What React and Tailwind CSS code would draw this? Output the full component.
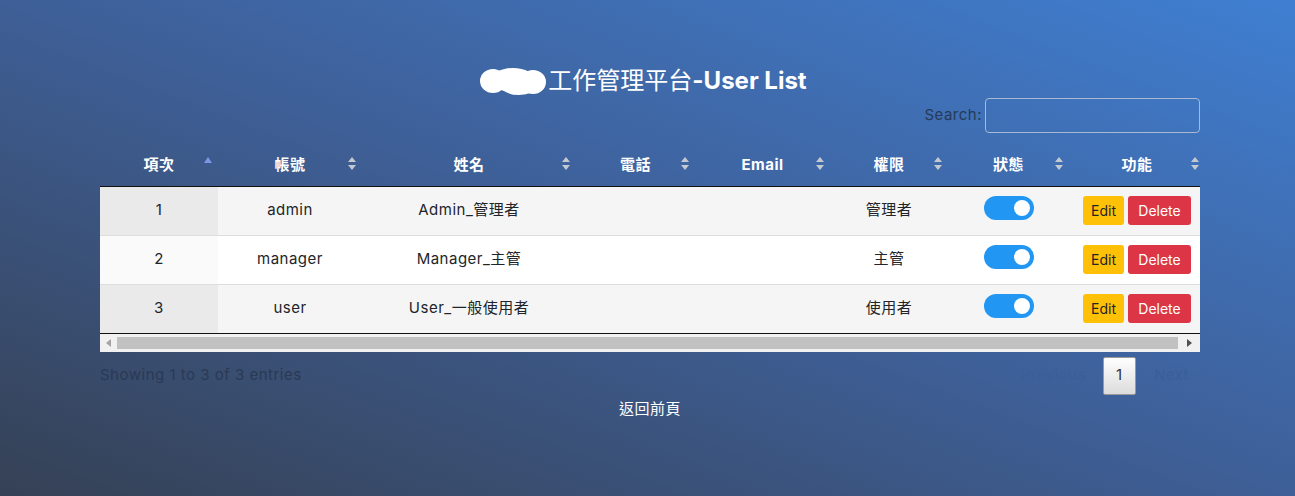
import React from 'react';

const FONT = { fontFamily: 'Inter, "Noto Sans CJK TC", sans-serif' };

const columns = [
  { label: '項次', w: 'w-[118px]', sorted: true },
  { label: '帳號', w: 'w-[144px]' },
  { label: '姓名', w: 'w-[214px]' },
  { label: '電話', w: 'w-[119px]' },
  { label: 'Email', w: 'w-[135px]' },
  { label: '權限', w: 'w-[118px]' },
  { label: '狀態', w: 'w-[121px]' },
  { label: '功能', w: 'w-[136px]' },
];

const users = [
  { id: 1, account: 'admin', name: 'Admin_管理者', role: '管理者' },
  { id: 2, account: 'manager', name: 'Manager_主管', role: '主管' },
  { id: 3, account: 'user', name: 'User_一般使用者', role: '使用者' },
];

const SortIcon = ({ sorted }) => (
  <svg width="8" height="14" viewBox="0 0 8 14" className="absolute right-[6px] top-[12px]">
    {sorted ? (
      <polygon points="4,0 8,6 0,6" fill="#8094e6" />
    ) : (
      <>
        <polygon points="4,0 8,5 0,5" fill="#c4c8d0" />
        <polygon points="0,8 8,8 4,13" fill="#c4c8d0" />
      </>
    )}
  </svg>
);

const Toggle = () => (
  <div className="mx-auto w-[50px] h-[24px] rounded-full bg-[#2196f3] flex items-center justify-end pr-[4px]">
    <div className="w-[16px] h-[16px] rounded-full bg-white" />
  </div>
);

const Blob = () => (
  <svg width="68" height="30" viewBox="0 0 68 30" className="inline-block align-middle mr-[1px] -mt-[2px]">
    <ellipse cx="14" cy="15" rx="13" ry="12" fill="white" />
    <ellipse cx="34" cy="14" rx="22" ry="12" fill="white" />
    <ellipse cx="54" cy="16" rx="13" ry="12" fill="white" />
    <ellipse cx="40" cy="20" rx="18" ry="9" fill="white" />
  </svg>
);

export default function App() {
  return (
    <div style={FONT} className="w-[1295px] h-[496px] bg-linear-to-tr from-[#354155] via-[#3e5f97] to-[#3f7fd2] overflow-hidden tracking-[0.5px]">
      <div className="w-[1100px] ml-[100px] pt-[64px]">
        <h1 className="h-[34px] leading-[34px] text-center text-[24px] text-white whitespace-nowrap pr-[14px] tracking-normal">
          <Blob />
          <span>工作管理平台</span>
          <span className="font-bold">-User List</span>
        </h1>

        <div className="flex justify-end items-center h-[35px]">
          <span className="text-[15px] text-[#263a58] mr-[3px]">Search:</span>
          <input className="w-[215px] h-[35px] border border-[#a9b9d3] rounded-[4px] bg-transparent outline-none" />
        </div>

        <div className="mt-[12px] w-[1100px] overflow-hidden">
          <table className="table-fixed border-collapse w-[1105px]">
            <thead>
              <tr className="h-[41px] border-b border-[#111]">
                {columns.map((c) => (
                  <th key={c.label} className={`${c.w} relative text-center text-[15px] font-bold text-white p-0`}>
                    {c.label}
                    <SortIcon sorted={c.sorted} />
                  </th>
                ))}
              </tr>
            </thead>
            <tbody className="text-[15px] text-[#212529]">
              {users.map((u, i) => {
                const odd = i % 2 === 0;
                return (
                  <tr key={u.id} className={`h-[49px] border-t border-[#dddddd] ${odd ? 'bg-[#f5f5f5]' : 'bg-white'} ${i === users.length - 1 ? 'border-b border-b-[#111]' : ''}`}>
                    <td className={`text-center ${odd ? 'bg-[#eaeaea]' : 'bg-[#fafafa]'}`}>{u.id}</td>
                    <td className="text-center">{u.account}</td>
                    <td className="text-center">{u.name}</td>
                    <td />
                    <td />
                    <td className="text-center">{u.role}</td>
                    <td className="text-center pb-[5px]"><Toggle /></td>
                    <td className="pr-[14px]">
                      <div className="flex justify-end gap-[4px] tracking-normal">
                        <button className="h-[29px] w-[41px] bg-[#ffc107] text-[#212529] text-[14px] rounded-[3px]">Edit</button>
                        <button className="h-[29px] w-[63px] bg-[#dc3545] text-white text-[14px] rounded-[3px]">Delete</button>
                      </div>
                    </td>
                  </tr>
                );
              })}
            </tbody>
          </table>
          <div className="h-[18px] bg-[#f1f1f1] flex items-center">
            <div className="w-[17px] flex justify-center">
              <svg width="5" height="8" viewBox="0 0 5 8"><polygon points="5,0 5,8 0,4" fill="#a3a3a3" /></svg>
            </div>
            <div className="flex-1 h-[12px] bg-[#c1c1c1]" />
            <div className="w-[22px] flex justify-center">
              <svg width="5" height="8" viewBox="0 0 5 8"><polygon points="0,0 5,4 0,8" fill="#505050" /></svg>
            </div>
          </div>
        </div>

        <div className="mt-[5px] h-[38px] flex items-center justify-between">
          <span className="text-[15px] text-[#2a3a56]">Showing 1 to 3 of 3 entries</span>
          <div className="flex items-center text-[15px] pr-[16px]">
            <span className="text-[#3a5f98] mr-[17px]">Previous</span>
            <span className="w-[33px] h-[38px] flex items-center justify-center border border-[#9a9a9a] rounded-[2px] bg-linear-to-b from-white to-[#dcdcdc] text-[#333]">1</span>
            <span className="text-[#3a5f98] ml-[18px] mr-[-5px]">Next</span>
          </div>
        </div>

        <div className="mt-[3px] text-center text-[15px] text-white leading-[22px]">返回前頁</div>
      </div>
    </div>
  );
}
